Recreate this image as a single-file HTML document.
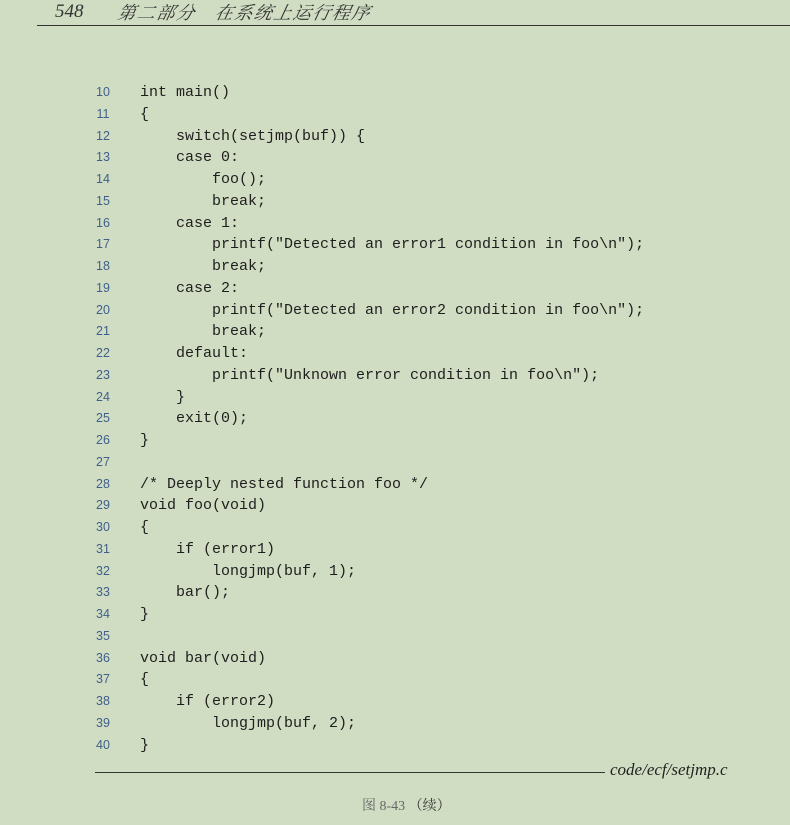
<!DOCTYPE html>
<html><head><meta charset="utf-8"><style>
body{margin:0;width:790px;height:825px;background:#d1ddc3;position:relative;overflow:hidden;font-family:"Liberation Serif","Noto Serif CJK SC",serif;color:#222}
.hd{position:absolute;top:0;left:55px;font-style:italic;font-size:19px;color:#333;line-height:24px}
.hd .n{font-family:"Liberation Serif",serif}
.hd .t{position:absolute;left:63px;white-space:nowrap;font-family:"Noto Serif CJK SC",serif;font-size:18px;letter-spacing:1.5px;transform:skewX(-12deg)}
.rule{position:absolute;left:37px;top:25px;width:753px;height:1px;background:#333}
.ln{position:absolute;left:88px;width:30px;text-align:center;font-family:"Liberation Sans",sans-serif;font-size:12.5px;color:#3e5f8c}
.cd{position:absolute;left:140px;font-family:"Liberation Mono",monospace;font-size:15px;white-space:pre;color:#1e1e1e;margin-top:2px}
.br{position:absolute;left:95px;top:772px;width:510px;height:1px;background:#333}
.fn{position:absolute;left:610px;top:760px;font-style:italic;font-size:17px;color:#222}
.cap{position:absolute;left:362px;top:795px;font-size:14px;color:#666;font-family:"Liberation Serif","Noto Serif CJK SC",serif}
</style></head><body>
<div class="hd"><span class="n">548</span><span class="t">第二部分　在系统上运行程序</span></div>
<div class="rule"></div>
<div class="br"></div>
<div class="fn">code/ecf/setjmp.c</div>
<div class="cap">图 8-43 <span style="color:#333">（续）</span></div>
<div class="ln" style="top:85px">10</div><div class="cd" style="top:82px">int main()</div>
<div class="ln" style="top:107px">11</div><div class="cd" style="top:104px">{</div>
<div class="ln" style="top:129px">12</div><div class="cd" style="top:126px">    switch(setjmp(buf)) {</div>
<div class="ln" style="top:150px">13</div><div class="cd" style="top:147px">    case 0:</div>
<div class="ln" style="top:172px">14</div><div class="cd" style="top:169px">        foo();</div>
<div class="ln" style="top:194px">15</div><div class="cd" style="top:191px">        break;</div>
<div class="ln" style="top:216px">16</div><div class="cd" style="top:213px">    case 1:</div>
<div class="ln" style="top:237px">17</div><div class="cd" style="top:234px">        printf("Detected an error1 condition in foo\n");</div>
<div class="ln" style="top:259px">18</div><div class="cd" style="top:256px">        break;</div>
<div class="ln" style="top:281px">19</div><div class="cd" style="top:278px">    case 2:</div>
<div class="ln" style="top:303px">20</div><div class="cd" style="top:300px">        printf("Detected an error2 condition in foo\n");</div>
<div class="ln" style="top:324px">21</div><div class="cd" style="top:321px">        break;</div>
<div class="ln" style="top:346px">22</div><div class="cd" style="top:343px">    default:</div>
<div class="ln" style="top:368px">23</div><div class="cd" style="top:365px">        printf("Unknown error condition in foo\n");</div>
<div class="ln" style="top:390px">24</div><div class="cd" style="top:387px">    }</div>
<div class="ln" style="top:411px">25</div><div class="cd" style="top:408px">    exit(0);</div>
<div class="ln" style="top:433px">26</div><div class="cd" style="top:430px">}</div>
<div class="ln" style="top:455px">27</div>
<div class="ln" style="top:477px">28</div><div class="cd" style="top:474px">/* Deeply nested function foo */</div>
<div class="ln" style="top:498px">29</div><div class="cd" style="top:495px">void foo(void)</div>
<div class="ln" style="top:520px">30</div><div class="cd" style="top:517px">{</div>
<div class="ln" style="top:542px">31</div><div class="cd" style="top:539px">    if (error1)</div>
<div class="ln" style="top:564px">32</div><div class="cd" style="top:561px">        longjmp(buf, 1);</div>
<div class="ln" style="top:585px">33</div><div class="cd" style="top:582px">    bar();</div>
<div class="ln" style="top:607px">34</div><div class="cd" style="top:604px">}</div>
<div class="ln" style="top:629px">35</div>
<div class="ln" style="top:651px">36</div><div class="cd" style="top:648px">void bar(void)</div>
<div class="ln" style="top:672px">37</div><div class="cd" style="top:669px">{</div>
<div class="ln" style="top:694px">38</div><div class="cd" style="top:691px">    if (error2)</div>
<div class="ln" style="top:716px">39</div><div class="cd" style="top:713px">        longjmp(buf, 2);</div>
<div class="ln" style="top:738px">40</div><div class="cd" style="top:735px">}</div>
</body></html>
